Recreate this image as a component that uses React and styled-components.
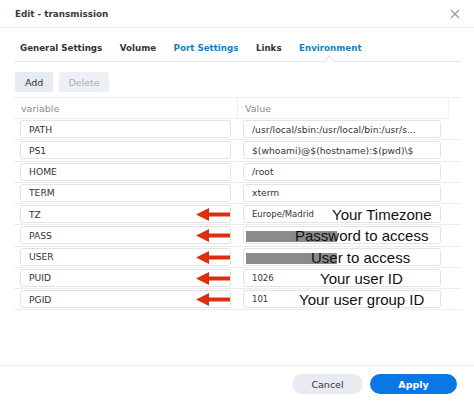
import React from 'react'
import styled, { createGlobalStyle } from 'styled-components'

const Global = createGlobalStyle`
    html, body { margin:0; padding:0; background:#fff; }
    body { font-family:"DejaVu Sans", Verdana, sans-serif; color:#333; }
`
const Dialog = styled.div`
    width:474px;
    height:402px;
    display:flex;
    flex-direction:column;
    background:#fff;
    overflow:hidden;
`
const Header = styled.div`
    height:28px;
    display:flex;
    align-items:center;
    justify-content:space-between;
    padding:0 14px 0 15px;
    border-bottom:1px solid #ececec;
    box-sizing:border-box;
`
const Title = styled.span`
    font-size:8.8px;
    font-weight:700;
    color:#3a3a3a;
`
const Close = styled.span`
    display:flex;
    color:#9a9a9a;
`
const Tabs = styled.div`
    margin:0 13px 0 14px;
    height:34px;
    display:flex;
    align-items:center;
    gap:17.5px;
    padding:6px 0 0 6px;
    border-bottom:1px solid #e6e6e6;
    box-sizing:border-box;
`
const Tab = styled.span`
    position:relative;
    font-size:8.7px;
    font-weight:700;
    color:${p => p.$blue ? '#1a7fc1' : '#333'};
    ${p => p.$active && `
        &::after {
            content:'';
            position:absolute;
            left:50%;
            bottom:-11px;
            width:6px;
            height:6px;
            margin-left:-4px;
            background:#fff;
            border-left:1px solid #e6e6e6;
            border-top:1px solid #e6e6e6;
            transform:rotate(45deg);
        }
    `}
`
const Toolbar = styled.div`
    display:flex;
    gap:6px;
    padding:10px 15px 5px;
`
const ToolButton = styled.button`
    height:20px;
    padding:0 ${p => p.$pad}px;
    border:none;
    border-radius:2px;
    background:${p => p.$disabled ? '#edf0f5' : '#e6ebf2'};
    color:${p => p.$disabled ? '#a9b0bb' : '#333'};
    font-family:inherit;
    font-size:9.5px;
`
const Table = styled.div`
    margin:0 13px 0 14px;
    border-top:1px solid #ececec;
    display:grid;
    grid-template-columns:223px 1fr;
`
const HeadCell = styled.div`
    height:20px;
    display:flex;
    align-items:center;
    padding-left:7px;
    font-size:9.5px;
    color:#8c8c8c;
    border-bottom:1px solid #ececec;
    border-left:${p => p.$right ? '1px solid #ececec' : 'none'};
    border-right:${p => p.$right ? '1px solid #f1f1f1' : 'none'};
    margin-right:${p => p.$right ? '12px' : '0'};
`
const Cell = styled.div`
    position:relative;
    height:21.25px;
    display:flex;
    align-items:center;
    padding:0 ${p => p.$right ? '20px 0 6px' : '6px 0 6px'};
    border-bottom:1px solid #ececec;
    box-sizing:border-box;
`
const Field = styled.div`
    position:relative;
    flex:1;
    height:18px;
    display:flex;
    align-items:center;
    padding:0 8px;
    border:1px solid #e3e3e3;
    border-radius:3px;
    box-sizing:border-box;
    font-size:${p => p.$small ? '8.5px' : '9.2px'};
    color:#333;
    white-space:nowrap;
    overflow:${p => p.$open ? 'visible' : 'hidden'};
`
const Arrow = styled.svg`
    position:absolute;
    right:7px;
    top:4px;
`
const Mask = styled.div`
    position:absolute;
    left:2px;
    top:4px;
    width:91px;
    height:11px;
    background:#8b8b8b;
`
const Note = styled.span`
    position:absolute;
    left:${p => p.$left}px;
    top:0;
    font-family:"Liberation Sans", Arial, sans-serif;
    font-size:15px;
    line-height:18px;
    color:#111;
    white-space:nowrap;
`
const Spacer = styled.div`
    flex:1;
`
const Footer = styled.div`
    height:36px;
    border-top:1px solid #ececec;
    display:flex;
    align-items:center;
    justify-content:flex-end;
    gap:7px;
    padding:0 17px 0 0;
`
const Pill = styled.button`
    height:20px;
    width:${p => p.$w}px;
    border:none;
    border-radius:10px;
    background:${p => p.$primary ? '#0b77e3' : '#e8ecf2'};
    color:${p => p.$primary ? '#fff' : '#333'};
    font-family:inherit;
    font-size:9.5px;
    font-weight:${p => p.$primary ? 700 : 400};
`

const rows = [
    { name: 'PATH', value: '/usr/local/sbin:/usr/local/bin:/usr/s...' },
    { name: 'PS1', value: '$(whoami)@$(hostname):$(pwd)\\$' },
    { name: 'HOME', value: '/root' },
    { name: 'TERM', value: 'xterm' },
    { name: 'TZ', value: 'Europe/Madrid', small: true, arrow: true, note: 'Your Timezone', left: 88 },
    { name: 'PASS', value: '', mask: true, arrow: true, note: 'Password to access', left: 51 },
    { name: 'USER', value: '', mask: true, arrow: true, note: 'User to access', left: 67 },
    { name: 'PUID', value: '1026', small: true, arrow: true, note: 'Your user ID', left: 76 },
    { name: 'PGID', value: '101', small: true, arrow: true, note: 'Your user group ID', left: 55 },
]

function RedArrow() {
    return (
        <Arrow width="34" height="13" viewBox="0 0 34 13">
            <path d="M0 6.5 L13 0 L13 4.5 L34 4.5 L34 8.5 L13 8.5 L13 13 Z" fill="#dc2f0e" />
        </Arrow>
    )
}

export default function App() {
    return (
        <Dialog>
            <Global />
            <Header>
                <Title>Edit - transmission</Title>
                <Close>
                    <svg width="10" height="10" viewBox="0 0 10 10">
                        <path d="M1 1 L9 9 M9 1 L1 9" stroke="#9a9a9a" strokeWidth="1.3" />
                    </svg>
                </Close>
            </Header>
            <Tabs>
                <Tab>General Settings</Tab>
                <Tab>Volume</Tab>
                <Tab $blue>Port Settings</Tab>
                <Tab>Links</Tab>
                <Tab $blue $active>Environment</Tab>
            </Tabs>
            <Toolbar>
                <ToolButton $pad={10}>Add</ToolButton>
                <ToolButton $pad={9} $disabled>Delete</ToolButton>
            </Toolbar>
            <Table>
                <HeadCell>variable</HeadCell>
                <HeadCell $right>Value</HeadCell>
                {rows.map(r => (
                    <React.Fragment key={r.name}>
                        <Cell>
                            <Field>{r.name}</Field>
                            {r.arrow && <RedArrow />}
                        </Cell>
                        <Cell $right>
                            <Field $small={r.small} $open={!!r.note}>
                                {r.mask && <Mask />}
                                {r.value}
                                {r.note && <Note $left={r.left}>{r.note}</Note>}
                            </Field>
                        </Cell>
                    </React.Fragment>
                ))}
            </Table>
            <Spacer />
            <Footer>
                <Pill $w={71}>Cancel</Pill>
                <Pill $w={87} $primary>Apply</Pill>
            </Footer>
        </Dialog>
    )
}
